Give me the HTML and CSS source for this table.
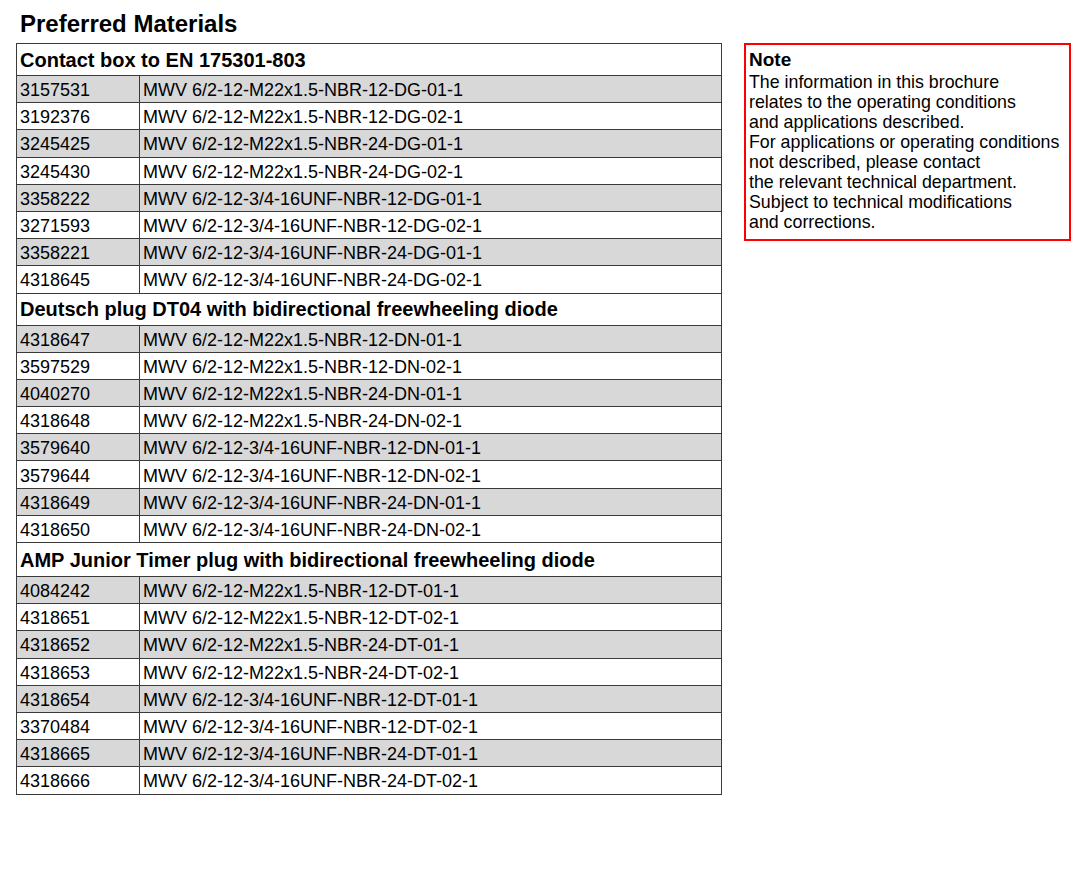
FILE: index.html
```html
<!DOCTYPE html>
<html lang="en">
<head>
<meta charset="utf-8">
<title>Preferred Materials</title>
<link rel="stylesheet" href="styles.css">
</head>
<body>
<div class="page">
  <div class="main">
    <h1 class="title">Preferred Materials</h1>
    <table class="materials">
      <colgroup><col class="c-num"><col class="c-desc"></colgroup>
      <tbody>
        <tr class="group"><th colspan="2">Contact box to EN 175301-803</th></tr>
        <tr class="shade"><td>3157531</td><td>MWV 6/2-12-M22x1.5-NBR-12-DG-01-1</td></tr>
        <tr><td>3192376</td><td>MWV 6/2-12-M22x1.5-NBR-12-DG-02-1</td></tr>
        <tr class="shade"><td>3245425</td><td>MWV 6/2-12-M22x1.5-NBR-24-DG-01-1</td></tr>
        <tr><td>3245430</td><td>MWV 6/2-12-M22x1.5-NBR-24-DG-02-1</td></tr>
        <tr class="shade"><td>3358222</td><td>MWV 6/2-12-3/4-16UNF-NBR-12-DG-01-1</td></tr>
        <tr><td>3271593</td><td>MWV 6/2-12-3/4-16UNF-NBR-12-DG-02-1</td></tr>
        <tr class="shade"><td>3358221</td><td>MWV 6/2-12-3/4-16UNF-NBR-24-DG-01-1</td></tr>
        <tr><td>4318645</td><td>MWV 6/2-12-3/4-16UNF-NBR-24-DG-02-1</td></tr>
        <tr class="group"><th colspan="2">Deutsch plug DT04 with bidirectional freewheeling diode</th></tr>
        <tr class="shade"><td>4318647</td><td>MWV 6/2-12-M22x1.5-NBR-12-DN-01-1</td></tr>
        <tr><td>3597529</td><td>MWV 6/2-12-M22x1.5-NBR-12-DN-02-1</td></tr>
        <tr class="shade"><td>4040270</td><td>MWV 6/2-12-M22x1.5-NBR-24-DN-01-1</td></tr>
        <tr><td>4318648</td><td>MWV 6/2-12-M22x1.5-NBR-24-DN-02-1</td></tr>
        <tr class="shade"><td>3579640</td><td>MWV 6/2-12-3/4-16UNF-NBR-12-DN-01-1</td></tr>
        <tr><td>3579644</td><td>MWV 6/2-12-3/4-16UNF-NBR-12-DN-02-1</td></tr>
        <tr class="shade"><td>4318649</td><td>MWV 6/2-12-3/4-16UNF-NBR-24-DN-01-1</td></tr>
        <tr><td>4318650</td><td>MWV 6/2-12-3/4-16UNF-NBR-24-DN-02-1</td></tr>
        <tr class="group tall"><th colspan="2">AMP Junior Timer plug with bidirectional freewheeling diode</th></tr>
        <tr class="shade"><td>4084242</td><td>MWV 6/2-12-M22x1.5-NBR-12-DT-01-1</td></tr>
        <tr><td>4318651</td><td>MWV 6/2-12-M22x1.5-NBR-12-DT-02-1</td></tr>
        <tr class="shade"><td>4318652</td><td>MWV 6/2-12-M22x1.5-NBR-24-DT-01-1</td></tr>
        <tr><td>4318653</td><td>MWV 6/2-12-M22x1.5-NBR-24-DT-02-1</td></tr>
        <tr class="shade"><td>4318654</td><td>MWV 6/2-12-3/4-16UNF-NBR-12-DT-01-1</td></tr>
        <tr><td>3370484</td><td>MWV 6/2-12-3/4-16UNF-NBR-12-DT-02-1</td></tr>
        <tr class="shade"><td>4318665</td><td>MWV 6/2-12-3/4-16UNF-NBR-24-DT-01-1</td></tr>
        <tr><td>4318666</td><td>MWV 6/2-12-3/4-16UNF-NBR-24-DT-02-1</td></tr>
      </tbody>
    </table>
  </div>
  <aside class="note">
    <h2 class="note-title">Note</h2>
    <p class="note-text">The information in this brochure<br>relates to the operating conditions<br>and applications described.<br>For applications or operating conditions<br>not described, please contact<br>the relevant technical department.<br>Subject to technical modifications<br>and corrections.</p>
  </aside>
</div>
</body>
</html>
```
FILE: styles.css
```css
html, body {
  margin: 0;
  padding: 0;
  background: #ffffff;
  color: #000000;
  font-family: "Liberation Sans", Arial, sans-serif;
}

.page {
  display: flex;
  align-items: flex-start;
  padding-left: 16px;
  gap: 22px;
}

.main {
  display: flex;
  flex-direction: column;
}

.title {
  margin: 0;
  padding: 10px 0 0 4px;
  font-size: 24px;
  line-height: 28px;
  font-weight: bold;
  height: 33px;
}

.materials {
  border-collapse: collapse;
  width: 705px;
  table-layout: fixed;
}

.c-num { width: 123px; }
.c-desc { width: 582px; }

.materials td,
.materials th {
  border: 1px solid #3a3a3a;
  padding: 0 0 0 3px;
  text-align: left;
  vertical-align: middle;
  white-space: nowrap;
}

.materials td {
  height: 24.2px;
  font-size: 18px;
  line-height: 20px;
  padding-top: 2px;
}

.materials th {
  height: 31px;
  font-size: 20px;
  font-weight: bold;
  line-height: 22px;
}

.materials tr.tall th {
  height: 33px;
}

.materials tr.shade td {
  background: #d8d8d8;
}

.note {
  margin-top: 43px;
  width: 320px;
  height: 194px;
  border: 2px solid #ff0000;
  padding: 0 0 0 3px;
}

.note-title {
  margin: 3px 0 0 0;
  font-size: 19px;
  line-height: 24px;
  font-weight: bold;
}

.note-text {
  margin: 0;
  font-size: 17.8px;
  line-height: 20px;
}
```
